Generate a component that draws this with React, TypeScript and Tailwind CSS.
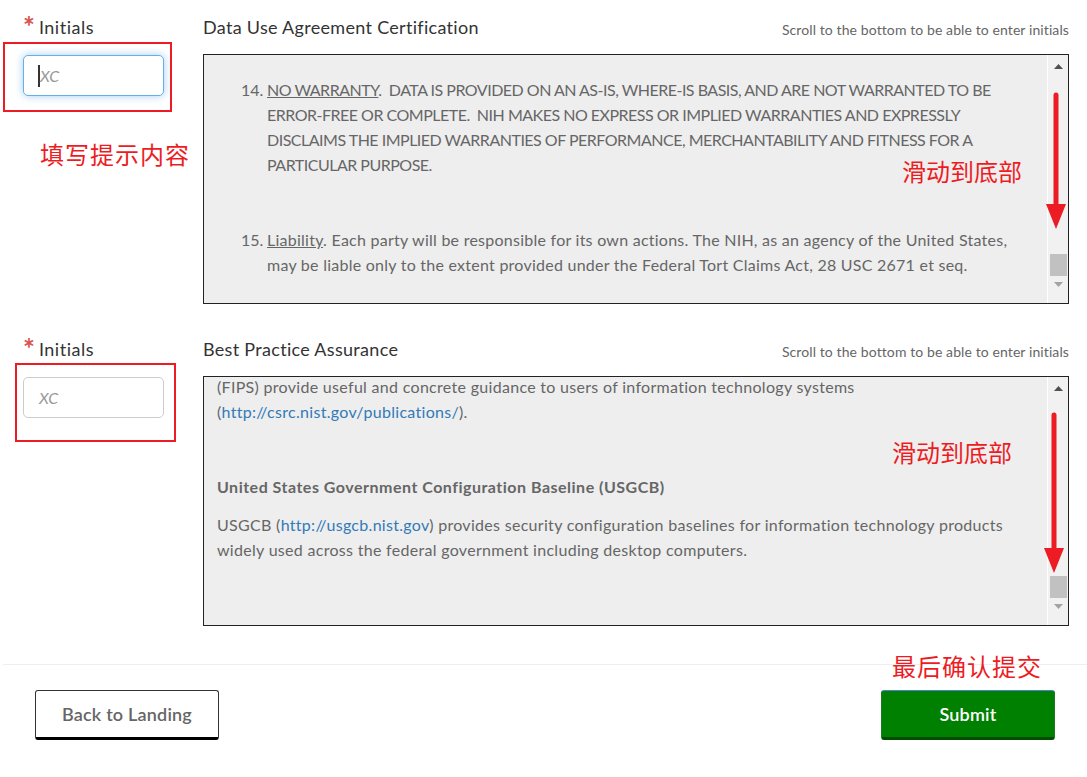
import React from "react";

const RED = "text-[#ed1c24]";

const Scrollbar = ({ thumbTop }: { thumbTop: number }) => (
  <div className="w-[21px] shrink-0 bg-[#f1f1f1] border-l border-white flex flex-col items-center">
    <svg width="9" height="6" viewBox="0 0 9 6" className="mt-[9px]">
      <path d="M0 5 L4.5 0 L9 5 Z" fill="#505050" />
    </svg>
    <div className="w-[17px] h-[22px] bg-[#c1c1c1]" style={{ marginTop: thumbTop }} />
    <svg width="9" height="6" viewBox="0 0 9 6" className="mt-[6px]">
      <path d="M0 0 L9 0 L4.5 5 Z" fill="#a3a3a3" />
    </svg>
  </div>
);

const RedArrow = ({ height }: { height: number }) => (
  <svg width="24" height={height} viewBox={`0 0 24 ${height}`}>
    <line x1="12" y1="3" x2="12" y2={height - 18} stroke="#ed1c24" strokeWidth="5" strokeLinecap="round" />
    <path d={`M2 ${height - 25} L22 ${height - 25} L12 ${height} Z`} fill="#ed1c24" />
  </svg>
);

const Field = ({ focused }: { focused?: boolean }) => (
  <div className="w-[180px] shrink-0">
    <div className="flex items-start h-[24px]">
      <span className="text-[#d9534f] text-[28px] leading-[24px] font-bold mr-[4px] mt-[-1px]">*</span>
      <span className="text-[18px] leading-[24px] text-[#333] tracking-[0.5px]">Initials</span>
    </div>
    {focused ? (
      <div className="mt-[16px] w-[141px] h-[41px] rounded-[5px] border border-[#66afe9] shadow-[0_0_8px_rgba(102,175,233,0.6)] bg-white flex items-center pl-[14px]">
        <span className="w-[2px] h-[22px] bg-[#333]" />
        <span className="italic text-[16px] text-[#999]">XC</span>
      </div>
    ) : (
      <div className="mt-[16px] w-[141px] h-[41px] rounded-[5px] border border-[#ccc] bg-white flex items-center pl-[15px]">
        <span className="italic text-[16px] text-[#999]">XC</span>
      </div>
    )}
  </div>
);

const Header = ({ title }: { title: string }) => (
  <div className="flex justify-between items-start h-[39px]">
    <span className="text-[18px] leading-[24px] text-[#333] tracking-[0.3px]">{title}</span>
    <span className="text-[14px] leading-[20px] text-[#666] mt-[5px] tracking-[0.1px]">
      Scroll to the bottom to be able to enter initials
    </span>
  </div>
);

export default function App() {
  return (
    <div
      className="relative w-[1087px] h-[777px] bg-white overflow-hidden pt-[15px]"
      style={{ fontFamily: "Lato, 'Noto Sans CJK SC', sans-serif" }}
    >
      {/* section 1 */}
      <div className="flex pl-[23px] pr-[18px]">
        <Field focused />
        <div className="flex-1">
          <Header title="Data Use Agreement Certification" />
          <div className="h-[250px] border border-[#222] bg-[#eeeeee] flex">
            <div className="flex-1 overflow-hidden pl-[37px] pt-[22px] text-[16px] leading-[25px] text-[#666] whitespace-pre">
              <div className="flex">
                <span className="w-[26px]">14.</span>
                <div className="tracking-[-0.5px]">
                  <span className="underline">NO WARRANTY</span>.  DATA IS PROVIDED ON AN AS-IS, WHERE-IS BASIS, AND ARE NOT WARRANTED TO BE
                  <br />
                  ERROR-FREE OR COMPLETE.  NIH MAKES NO EXPRESS OR IMPLIED WARRANTIES AND EXPRESSLY
                  <br />
                  DISCLAIMS THE IMPLIED WARRANTIES OF PERFORMANCE, MERCHANTABILITY AND FITNESS FOR A
                  <br />
                  PARTICULAR PURPOSE.
                </div>
              </div>
              <div className="flex mt-[50px]">
                <span className="w-[26px]">15.</span>
                <div className="tracking-[0.25px]">
                  <span className="underline">Liability</span>. Each party will be responsible for its own actions. The NIH, as an agency of the United States,
                  <br />
                  may be liable only to the extent provided under the Federal Tort Claims Act, 28 USC 2671 et seq.
                </div>
              </div>
            </div>
            <Scrollbar thumbTop={184} />
          </div>
        </div>
      </div>

      {/* section 2 */}
      <div className="flex pl-[23px] pr-[18px] mt-[33px]">
        <Field />
        <div className="flex-1">
          <Header title="Best Practice Assurance" />
          <div className="h-[250px] border border-[#222] bg-[#eeeeee] flex">
            <div className="flex-1 overflow-hidden pl-[13px] text-[16px] leading-[25px] text-[#666] whitespace-pre tracking-[0.3px]">
              <div className="mt-[-3px]">
                (FIPS) provide useful and concrete guidance to users of information technology systems
                <br />
                (<span className="text-[#337ab7]">http://csrc.nist.gov/publications/</span>).
              </div>
              <div className="mt-[50px] font-bold tracking-[0.5px]">United States Government Configuration Baseline (USGCB)</div>
              <div className="mt-[13px]">
                USGCB (<span className="text-[#337ab7]">http://usgcb.nist.gov</span>) provides security configuration baselines for information technology products
                <br />
                widely used across the federal government including desktop computers.
              </div>
            </div>
            <Scrollbar thumbTop={184} />
          </div>
        </div>
      </div>

      {/* divider */}
      <div className="ml-[3px] mt-[38px] border-t border-[#eee]" />

      {/* buttons */}
      <div className="flex justify-between pl-[35px] pr-[32px] mt-[25px]">
        <button className="w-[184px] h-[50px] rounded-[3px] border border-[#333] border-b-[3px] border-b-black bg-white text-[18px] font-semibold text-[#666] tracking-[0.2px]">
          Back to Landing
        </button>
        <button className="w-[174px] h-[50px] rounded-[3px] border border-[#1e7a1e] border-t-[#4a86c8] border-b-[3px] border-b-[#004d00] bg-[#008000] text-[18px] font-semibold text-white tracking-[0.2px]">
          Submit
        </button>
      </div>

      {/* annotations */}
      <div className="absolute left-[3px] top-[42px] w-[169px] h-[70px] border-2 border-[#ed1c24]" />
      <div className="absolute left-[15px] top-[363px] w-[161px] h-[79px] border-2 border-[#ed1c24]" />
      <div className={`absolute left-[40px] top-[139px] text-[24px] leading-[32px] tracking-[1px] ${RED}`}>填写提示内容</div>
      <div className={`absolute left-[902px] top-[156px] text-[24px] leading-[32px] ${RED}`}>滑动到底部</div>
      <div className={`absolute left-[892px] top-[437px] text-[24px] leading-[32px] ${RED}`}>滑动到底部</div>
      <div className={`absolute left-[892px] top-[651px] text-[24px] leading-[32px] tracking-[1px] ${RED}`}>最后确认提交</div>
      <div className="absolute left-[1044px] top-[92px]">
        <RedArrow height={137} />
      </div>
      <div className="absolute left-[1042px] top-[412px]">
        <RedArrow height={161} />
      </div>
    </div>
  );
}
